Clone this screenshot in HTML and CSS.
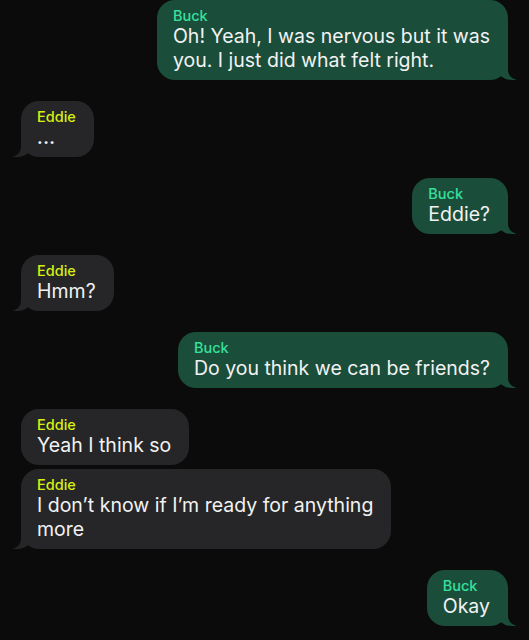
FILE: index.html
```html
<!DOCTYPE html>
<html lang="en">
<head>
  <meta charset="UTF-8" />
  <meta name="viewport" content="width=device-width, initial-scale=1.0"/>
  <title>Chat</title>
  <link rel="stylesheet" href="styles.css">
</head>
<body>

<div class="chat">
  <div class="msg sent tail">
    <span class="name">Buck</span>
    <p class="text">Oh! Yeah, I was nervous but it was<br>you. I just did what felt right.</p>
  </div>

  <div class="msg received tail">
    <span class="name">Eddie</span>
    <p class="text dots">...</p>
  </div>

  <div class="msg sent tail">
    <span class="name">Buck</span>
    <p class="text">Eddie?</p>
  </div>

  <div class="msg received tail">
    <span class="name">Eddie</span>
    <p class="text">Hmm?</p>
  </div>

  <div class="msg sent tail">
    <span class="name">Buck</span>
    <p class="text">Do you think we can be friends?</p>
  </div>

  <!-- same sender, no tail -->
  <div class="msg received grouped">
    <span class="name">Eddie</span>
    <p class="text">Yeah I think so</p>
  </div>

  <div class="msg received tail">
    <span class="name">Eddie</span>
    <p class="text">I don&rsquo;t know if I&rsquo;m ready for anything<br>more</p>
  </div>

  <div class="msg sent tail">
    <span class="name">Buck</span>
    <p class="text">Okay</p>
  </div>
</div>

</body>
</html>
```

FILE: styles.css
```css
* { margin: 0; padding: 0; box-sizing: border-box; }
body {
  font-family: Inter, "Noto Sans", sans-serif;
  background: #0b0b0b;
  color: #f2f2f2;
  min-height: 100vh;
}
.chat {
  display: flex;
  flex-direction: column;
  padding: 0 21px;
}
.msg {
  position: relative;
  max-width: 380px;
  padding: 7px 18px 8px 16px;
  border-radius: 18px;
  margin-bottom: 21px;
}
.msg.grouped {
  margin-bottom: 4px;
}
.name {
  display: block;
  font-size: 14.5px;
  font-weight: 500;
  line-height: 17px;
}
.text {
  font-size: 19.5px;
  line-height: 24px;
  white-space: nowrap;
}
.text.dots {
  font-size: 17px;
  font-weight: 700;
  letter-spacing: 0.5px;
  padding-top: 3px;
  line-height: 21px;
}

/* --- Sent (Buck) --- */
.sent {
  align-self: flex-end;
  background: #1b4d3b;
}
.sent .name { color: #36e09b; }

/* --- Received (Eddie) --- */
.received {
  align-self: flex-start;
  background: #262628;
}
.received .name { color: #d8f012; }

/* Bubble tails */
.tail::before,
.tail::after {
  content: "";
  position: absolute;
  bottom: 0;
  height: 20px;
}
.sent.tail::before {
  right: -8px;
  width: 20px;
  background: #1b4d3b;
  border-bottom-left-radius: 16px 14px;
}
.sent.tail::after {
  right: -10px;
  width: 10px;
  background: #0b0b0b;
  border-bottom-left-radius: 10px;
}
.received.tail::before {
  left: -8px;
  width: 20px;
  background: #262628;
  border-bottom-right-radius: 16px 14px;
}
.received.tail::after {
  left: -10px;
  width: 10px;
  background: #0b0b0b;
  border-bottom-right-radius: 10px;
}
```
